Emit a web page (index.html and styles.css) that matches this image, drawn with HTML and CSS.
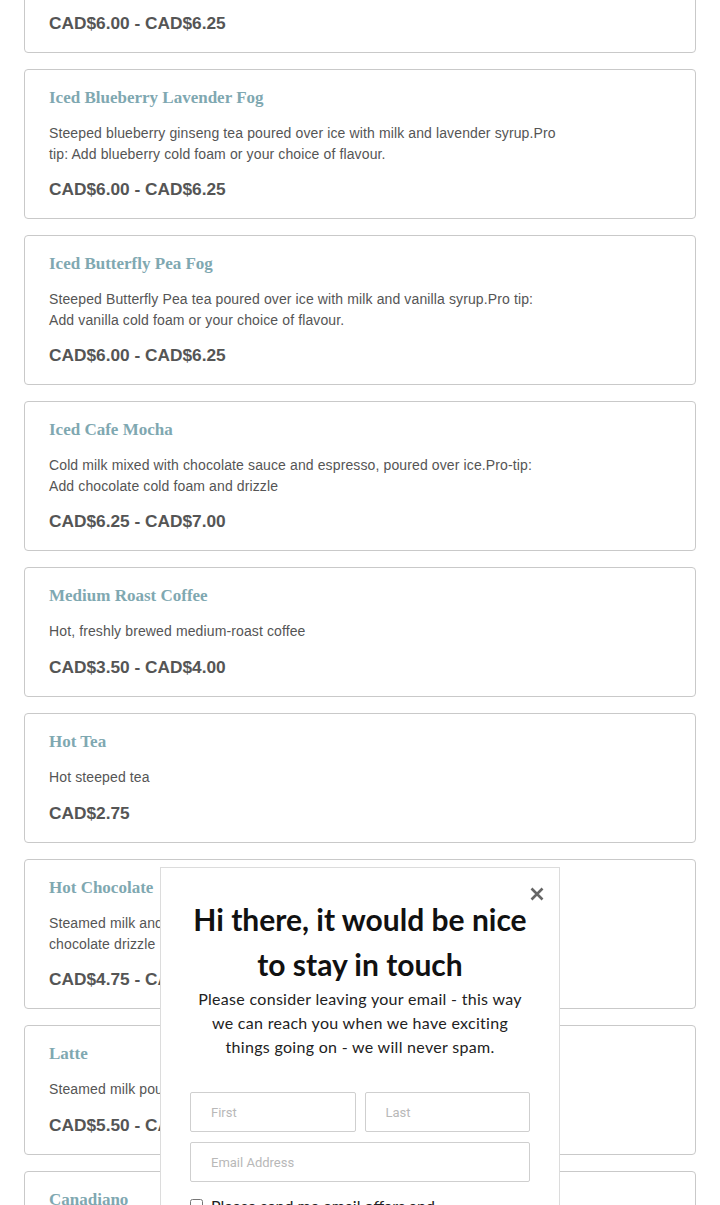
FILE: index.html
```html
<!DOCTYPE html>
<html lang="en">
<head>
<meta charset="utf-8">
<title>Menu</title>
<link rel="stylesheet" href="styles.css">
</head>
<body>
<main class="menu">
  <article class="item">
    <h3 class="item-title">Iced London Fog</h3>
    <p class="item-desc">Steeped earl grey tea poured over ice with milk and vanilla syrup.Pro tip: Add vanilla cold foam or your choice of flavour.</p>
    <p class="item-price">CAD$6.00 - CAD$6.25</p>
  </article>
  <article class="item">
    <h3 class="item-title">Iced Blueberry Lavender Fog</h3>
    <p class="item-desc">Steeped blueberry ginseng tea poured over ice with milk and lavender syrup.Pro tip: Add blueberry cold foam or your choice of flavour.</p>
    <p class="item-price">CAD$6.00 - CAD$6.25</p>
  </article>
  <article class="item">
    <h3 class="item-title">Iced Butterfly Pea Fog</h3>
    <p class="item-desc">Steeped Butterfly Pea tea poured over ice with milk and vanilla syrup.Pro tip: Add vanilla cold foam or your choice of flavour.</p>
    <p class="item-price">CAD$6.00 - CAD$6.25</p>
  </article>
  <article class="item">
    <h3 class="item-title">Iced Cafe Mocha</h3>
    <p class="item-desc">Cold milk mixed with chocolate sauce and espresso, poured over ice.Pro-tip: Add chocolate cold foam and drizzle</p>
    <p class="item-price">CAD$6.25 - CAD$7.00</p>
  </article>
  <article class="item">
    <h3 class="item-title">Medium Roast Coffee</h3>
    <p class="item-desc">Hot, freshly brewed medium-roast coffee</p>
    <p class="item-price">CAD$3.50 - CAD$4.00</p>
  </article>
  <article class="item">
    <h3 class="item-title">Hot Tea</h3>
    <p class="item-desc">Hot steeped tea</p>
    <p class="item-price">CAD$2.75</p>
  </article>
  <article class="item">
    <h3 class="item-title">Hot Chocolate</h3>
    <p class="item-desc">Steamed milk and rich dark chocolate sauce topped with whipped cream and chocolate drizzle</p>
    <p class="item-price">CAD$4.75 - CAD$5.25</p>
  </article>
  <article class="item">
    <h3 class="item-title">Latte</h3>
    <p class="item-desc">Steamed milk poured over a double shot of espresso</p>
    <p class="item-price">CAD$5.50 - CAD$6.25</p>
  </article>
  <article class="item">
    <h3 class="item-title">Canadiano</h3>
    <p class="item-desc">Espresso topped with hot water</p>
    <p class="item-price">CAD$4.00 - CAD$4.50</p>
  </article>
</main>

<div class="popup" role="dialog" aria-label="Newsletter signup">
  <button class="popup-close" aria-label="Close">
    <svg width="14" height="14" viewBox="0 0 14 14" aria-hidden="true"><path d="M1.5 1.5 L12.5 12.5 M12.5 1.5 L1.5 12.5" stroke="#666" stroke-width="2.6" stroke-linecap="butt" fill="none"/></svg>
  </button>
  <h2 class="popup-title">Hi there, it would be nice to stay in touch</h2>
  <p class="popup-text">Please consider leaving your email - this way we can reach you when we have exciting things going on - we will never spam.</p>
  <form class="popup-form">
    <div class="name-row">
      <input class="field" type="text" placeholder="First">
      <input class="field" type="text" placeholder="Last">
    </div>
    <input class="field" type="email" placeholder="Email Address">
    <label class="consent"><input type="checkbox" class="consent-box"> <span>Please send me email offers and announcements</span></label>
  </form>
</div>
</body>
</html>
```

FILE: styles.css
```css
* { box-sizing: border-box; }

html, body {
  margin: 0;
  padding: 0;
  background: #fff;
}

body {
  font-family: "Liberation Sans", Arial, sans-serif;
  overflow: hidden;
}

.menu {
  display: flex;
  flex-direction: column;
  gap: 16px;
  margin: -97px 24px 0;
}

.item {
  border: 1px solid #c9c9c9;
  border-radius: 4px;
  padding: 17px 24px 17px;
  background: #fff;
}

.item-title {
  margin: 0;
  font-family: "Liberation Serif", "Times New Roman", serif;
  font-weight: bold;
  font-size: 17px;
  line-height: 22px;
  color: #7fa8b1;
}

.item-desc {
  margin: 14px 0 0;
  max-width: 509px;
  min-height: 22px;
  font-size: 14px;
  letter-spacing: 0.12px;
  line-height: 21px;
  color: #555;
}

.item-price {
  margin: 12px 0 0;
  font-size: 17.3px;
  font-weight: bold;
  line-height: 24px;
  color: #555;
}

.popup {
  position: fixed;
  left: 160px;
  top: 867px;
  width: 400px;
  height: 400px;
  background: #fff;
  border: 1px solid #dcdcdc;
  padding: 29px 29px 0;
  text-align: center;
}

.popup-close {
  position: absolute;
  top: 19px;
  right: 15px;
  width: 14px;
  height: 14px;
  padding: 0;
  border: 0;
  background: none;
  cursor: pointer;
  display: flex;
}

.popup-title {
  margin: 0;
  font-family: "Lato", "Liberation Sans", sans-serif;
  font-weight: bold;
  font-size: 30px;
  line-height: 45px;
  color: #111;
}

.popup-text {
  margin: 0;
  font-family: "Lato", "Liberation Sans", sans-serif;
  font-size: 16px;
  line-height: 24px;
  color: #222;
  letter-spacing: 0.3px;
}

.popup-form {
  margin-top: 33px;
  display: flex;
  flex-direction: column;
  gap: 10px;
  text-align: left;
}

.name-row {
  display: flex;
  gap: 9px;
}

.name-row .field { flex: 1; min-width: 0; }

.field {
  height: 40px;
  border: 1px solid #cfcfcf;
  border-radius: 2px;
  padding: 0 20px;
  font-family: Roboto, "Liberation Sans", sans-serif;
  font-size: 13px;
  color: #333;
  background: #fff;
}

.field::placeholder { color: #b8b8b8; }

.consent {
  display: flex;
  align-items: flex-start;
  gap: 8px;
  margin-top: 4px;
  font-family: "Lato", "Liberation Sans", sans-serif;
  font-size: 16px;
  line-height: 20px;
  color: #222;
}

.consent-box {
  margin: 3px 0 0;
  width: 13px;
  height: 13px;
  flex: none;
}
```
